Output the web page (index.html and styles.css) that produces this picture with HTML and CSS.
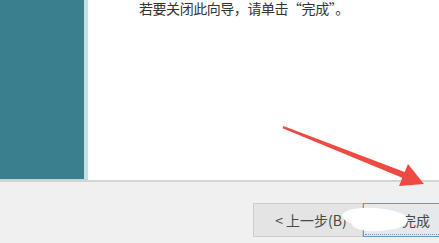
FILE: index.html
```html
<!DOCTYPE html>
<html lang="zh-CN">
<head>
<meta charset="utf-8">
<link rel="stylesheet" href="styles.css">
</head>
<body>
<div class="wizard">
  <div class="top">
    <div class="side"></div>
    <div class="content">
      <p class="msg">若要关闭此向导，请单击“完成”。</p>
    </div>
  </div>
  <div class="bottom">
    <button class="btn prev">&lt; 上一步(B)</button>
    <button class="btn finish"><span class="focus">完成</span></button>
  </div>
  <div class="blob"></div>
  <div class="blob blob2"></div>
  <svg class="arrow" width="439" height="243" viewBox="0 0 439 243">
    <polygon points="283.4,126 282.6,128.2 402.8,178 405.2,172.2" fill="#ec4a43"/>
    <polygon points="408,164 424,184 399,186" fill="#ec4a43"/>
  </svg>
</div>
</body>
</html>
```
FILE: styles.css
```css
* { box-sizing: border-box; }
html, body { margin: 0; padding: 0; }
body {
  width: 439px;
  height: 243px;
  overflow: hidden;
  font-family: "Microsoft YaHei", "Noto Sans CJK SC", sans-serif;
  background: #f0f0f0;
}
.wizard {
  position: relative;
  width: 439px;
  height: 243px;
  display: flex;
  flex-direction: column;
}
.top {
  display: flex;
  height: 182px;
  border-bottom: 2px solid #d4d4d4;
  background: #fff;
}
.side {
  width: 88px;
  background: #3a7f8e;
  border-right: 4px solid #c5dee5;
  border-bottom: 1px solid #b9d6de;
}
.content {
  flex: 1;
  padding-left: 51px;
}
.msg {
  margin: 0;
  font-size: 14px;
  line-height: 16px;
  color: #333;
  letter-spacing: -0.45px;
}
.bottom {
  flex: 1;
  display: flex;
  align-items: flex-start;
  padding: 21px 0 0 253px;
  overflow: hidden;
}
.btn {
  flex: none;
  height: 34px;
  font-family: "Noto Sans CJK SC", sans-serif;
  font-size: 14px;
  color: #474747;
  padding: 0;
}
.prev {
  width: 110px;
  background: #e4e4e4;
  border: 1px solid #cdcdcd;
  padding-left: 6px;
}
.finish {
  width: 100px;
  background: #e6e9ec;
  border: 1px solid #5a9ad6;
  padding: 1px;
  text-align: left;
}
.focus {
  display: flex;
  align-items: center;
  height: 100%;
  padding-left: 37px;
  border-bottom: 1px dotted #7e8fa3;
}
.blob {
  position: absolute;
  left: 342px;
  top: 208px;
  width: 66px;
  height: 20px;
  background: #fff;
  border-radius: 50%;
  transform: rotate(4deg);
}
.blob2 {
  left: 352px;
  top: 215px;
  width: 54px;
  height: 16px;
  transform: rotate(-3deg);
}
.arrow {
  position: absolute;
  left: 0;
  top: 0;
  pointer-events: none;
}
```
